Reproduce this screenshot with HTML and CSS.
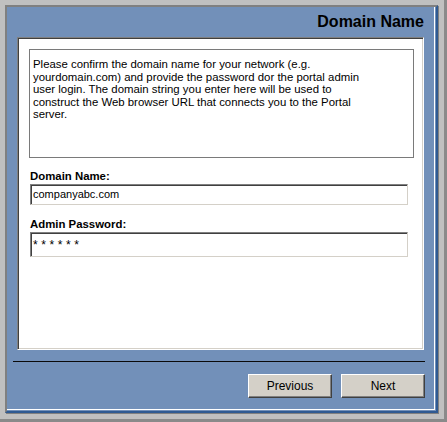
FILE: index.html
```html
<!DOCTYPE html>
<html>
<head>
<meta charset="utf-8">
<link rel="stylesheet" href="styles.css">
</head>
<body>
<div class="frame">
  <div class="window">
    <div class="title">Domain Name</div>
    <div class="panel">
      <div class="info">Please confirm the domain name for your network (e.g.<br>yourdomain.com) and provide the password dor the portal admin<br>user login. The domain string you enter here will be used to<br>construct the Web browser URL that connects you to the Portal<br>server.</div>
      <div class="label">Domain Name:</div>
      <div class="field">companyabc.com</div>
      <div class="label label-second">Admin Password:</div>
      <div class="field field-pw"><span class="stars">******</span></div>
    </div>
    <div class="sep"></div>
    <div class="buttons">
      <div class="btn">Previous</div>
      <div class="btn">Next</div>
    </div>
  </div>
</div>
</body>
</html>
```
FILE: styles.css
```css
html, body {
  margin: 0;
  padding: 0;
  background: #c0c0c0;
}
body {
  font-family: "Liberation Sans", Arial, sans-serif;
  color: #000;
}
.frame {
  width: 447px;
  height: 422px;
  box-sizing: border-box;
  background: #c0c0c0;
  padding: 5px 6px 6px 5px;
  border-right: 3px solid #8a8a8a;
  border-bottom: 3px solid #8a8a8a;
  display: flex;
}
.window {
  flex: 1;
  display: flex;
  flex-direction: column;
  background: #7290b9;
  border-style: solid;
  border-width: 2px;
  border-color: #808080 #2f5a92 #2f5a92 #808080;
  box-shadow: inset -1px -1px 0 #7290b9, inset -2px -2px 0 #ffffff, 1px 1px 0 #808080;
}
.title {
  padding: 6px 12px 0 0;
  text-align: right;
  font-weight: bold;
  font-size: 16px;
  line-height: 17px;
}
.panel {
  margin: 7px 12px 0 10px;
  height: 313px;
  box-sizing: border-box;
  background: #fff;
  border: 1px solid;
  border-color: #808080 #fff #fff #808080;
  box-shadow: inset 1px 1px 0 #404040, inset -1px -1px 0 #d4d0c8;
  padding: 11px 0 0 11px;
}
.info {
  width: 385px;
  height: 109px;
  box-sizing: border-box;
  border: 1px solid #7a7a7a;
  padding: 8px 3px 0 3px;
  font-size: 11.4px;
  line-height: 12.5px;
}
.label {
  margin-top: 12px;
  padding-left: 1px;
  font-weight: bold;
  font-size: 11.4px;
  line-height: 13px;
}
.label-second {
  margin-top: 13px;
}
.field {
  margin: 1px 0 0 1px;
  width: 378px;
  height: 21px;
  box-sizing: border-box;
  border: 1px solid;
  border-color: #808080 #d4d0c8 #d4d0c8 #808080;
  box-shadow: inset 1px 1px 0 #404040;
  padding: 0 0 0 2px;
  font-size: 11px;
  line-height: 19px;
}
.field-pw {
  height: 25px;
  line-height: 25px;
}
.stars {
  font-size: 12px;
  letter-spacing: 3.6px;
}
.sep {
  margin: 11px 11px 0 6px;
  height: 1px;
  background: #0a0a0a;
}
.buttons {
  margin: 12px 11px 0 0;
  display: flex;
  justify-content: flex-end;
  gap: 9px;
}
.btn {
  width: 84px;
  height: 24px;
  box-sizing: border-box;
  background: #d4d0c8;
  border: 1px solid;
  border-color: #ffffff #404040 #404040 #ffffff;
  box-shadow: inset -1px -1px 0 #808080;
  font-size: 12px;
  line-height: 23px;
  text-align: center;
}
```
